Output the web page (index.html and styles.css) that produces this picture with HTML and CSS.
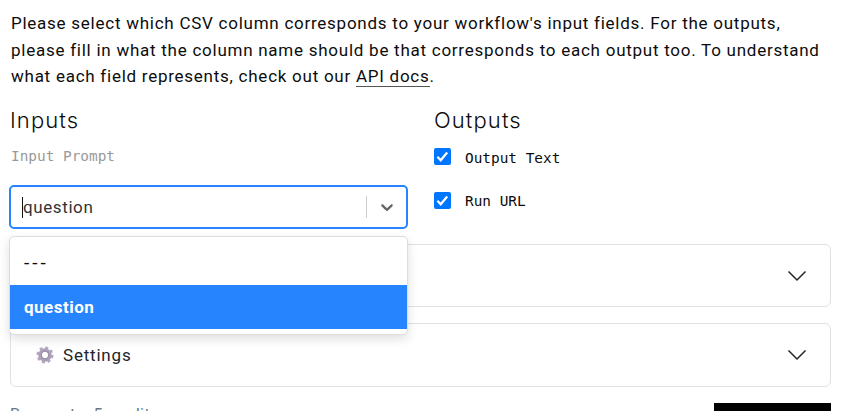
FILE: index.html
```html
<!DOCTYPE html>
<html lang="en">
<head>
<meta charset="utf-8">
<title>Workflow columns</title>
<link rel="stylesheet" href="styles.css">
</head>
<body>
<main class="page">
  <p class="intro">
    <span class="line">Please select which CSV column corresponds to your workflow's input fields. For the outputs,</span>
    <span class="line">please fill in what the column name should be that corresponds to each output too. To understand</span>
    <span class="line">what each field represents, check out our <a class="docs">API docs</a>.</span>
  </p>
  <section class="columns">
    <div class="inputs">
      <h2>Inputs</h2>
      <div class="label">Input Prompt</div>
      <div class="select">
        <span class="caret"></span><span class="value">question</span>
        <span class="divider"></span>
        <svg class="arrow" width="20" height="20" viewBox="0 0 20 20"><path d="M4.516 7.548c0.436-0.446 1.043-0.481 1.576 0l3.908 3.747 3.908-3.747c0.533-0.481 1.141-0.446 1.574 0 0.436 0.445 0.408 1.197 0 1.615-0.406 0.418-4.695 4.502-4.695 4.502-0.217 0.223-0.502 0.335-0.787 0.335s-0.57-0.112-0.789-0.335c0 0-4.287-4.084-4.695-4.502s-0.436-1.17 0-1.615z"/></svg>
        <div class="menu">
          <div class="option dashes">---</div>
          <div class="option selected">question</div>
        </div>
      </div>
    </div>
    <div class="outputs">
      <h2>Outputs</h2>
      <div class="check"><svg class="box" width="17" height="17" viewBox="0 0 17 17"><rect width="17" height="17" rx="2"/><path d="M3.4 8.8 6.7 12.2 13.2 4.4"/></svg><span>Output Text</span></div>
      <div class="check second"><svg class="box" width="17" height="17" viewBox="0 0 17 17"><rect width="17" height="17" rx="2"/><path d="M3.4 8.8 6.7 12.2 13.2 4.4"/></svg><span>Run URL</span></div>
    </div>
  </section>
  <section class="panel first">
    <svg class="chevron" width="20" height="12" viewBox="0 0 20 12"><path d="M1.5 1.5 10 10 18.5 1.5"/></svg>
  </section>
  <section class="panel settings">
    <svg class="gear" width="18" height="18" viewBox="0 0 18 18"><circle class="teeth" cx="9" cy="9" r="7.3"/><circle class="ring" cx="9" cy="9" r="5"/><circle class="inner" cx="9" cy="9" r="3.8"/></svg>
    <span class="title">Settings</span>
    <svg class="chevron" width="20" height="12" viewBox="0 0 20 12"><path d="M1.5 1.5 10 10 18.5 1.5"/></svg>
  </section>
  <footer class="footer"><span class="cost">Run cost = 5 credits</span><span class="submit"></span></footer>
</main>
</body>
</html>
```
FILE: styles.css
```css
* { box-sizing: border-box; }
body { margin: 0; background: #fff; color: #0c0c0c; font-family: Roboto, sans-serif; overflow: hidden; }
.page { width: 841px; height: 411px; padding: 10px 10px 0; overflow: hidden; }
.intro { margin: 0; padding-left: 1px; font-size: 17px; line-height: 26.6px; height: 80px; }
.line { display: block; white-space: nowrap; letter-spacing: .745px; }
.docs { border-bottom: 1px solid #555; }
.columns { display: flex; height: 154px; }
.inputs { width: 424px; padding-top: 16px; }
.outputs { padding-top: 16px; }
h2 { margin: 0; font-family: Inter, sans-serif; font-size: 22px; font-weight: 300; line-height: 28px; letter-spacing: 1.1px; }
.label { margin-top: 12px; padding-left: 1px; height: 20px; font: 14.4px/20px "DejaVu Sans Mono", monospace; color: #999; }
.select { position: relative; display: flex; align-items: center; width: 399px; height: 44px; margin: 19px 0 0 -1px; border: 2px solid #2684ff; border-radius: 5px; padding-left: 11px; }
.caret { width: 1px; height: 21px; background: #111; }
.value { flex: 1; font-size: 17px; letter-spacing: .6px; color: #333; }
.divider { width: 1px; height: 22px; background: #ccc; }
.arrow { margin: 0 9px 0 10px; fill: #666; }
.menu { position: absolute; z-index: 2; left: -2px; top: 49px; width: 399px; height: 99px; padding: 4px 0; background: #fff; border: 1px solid #ddd; border-radius: 5px; box-shadow: 0 4px 11px rgba(0,0,0,.13); }
.option { height: 44px; padding-left: 14px; line-height: 45px; font-size: 17px; letter-spacing: .5px; }
.dashes { line-height: 43px; font-size: 19px; letter-spacing: 3px; }
.selected { background: #2684ff; color: #fff; font-weight: 700; }
.check { display: flex; align-items: center; height: 20px; margin-top: 13px; font: 14.4px/20px "DejaVu Sans Mono", monospace; }
.check span { padding-top: 1px; }
.second { margin-top: 23px; }
.box { margin: -1px 14px 0 0; }
.second .box { margin-top: 0; }
.box rect { fill: #0075ff; }
.box path { fill: none; stroke: #fff; stroke-width: 2.3; }
.panel { display: flex; align-items: center; width: 821px; height: 63px; border: 1px solid #dee2e6; border-radius: 6px; padding: 0 23px 0 25px; }
.settings { height: 64px; margin-top: 16px; }
.chevron { margin-left: auto; fill: none; stroke: #212529; stroke-width: 1.5; }
.gear { fill: none; }
.teeth { stroke: #b5a9c2; stroke-width: 2.5; stroke-dasharray: 3 2.733; }
.ring { stroke: #ada0ba; stroke-width: 3.5; }
.inner { stroke: #978aa6; stroke-width: 1; }
.title { margin-left: 9px; font-size: 17px; letter-spacing: .8px; color: #212529; }
.footer { display: flex; justify-content: space-between; width: 821px; padding-top: 16px; color: #6c757d; font-size: 16px; }
.cost { line-height: 24px; letter-spacing: .4px; }
.submit { width: 117px; height: 40px; background: #000; }
```
